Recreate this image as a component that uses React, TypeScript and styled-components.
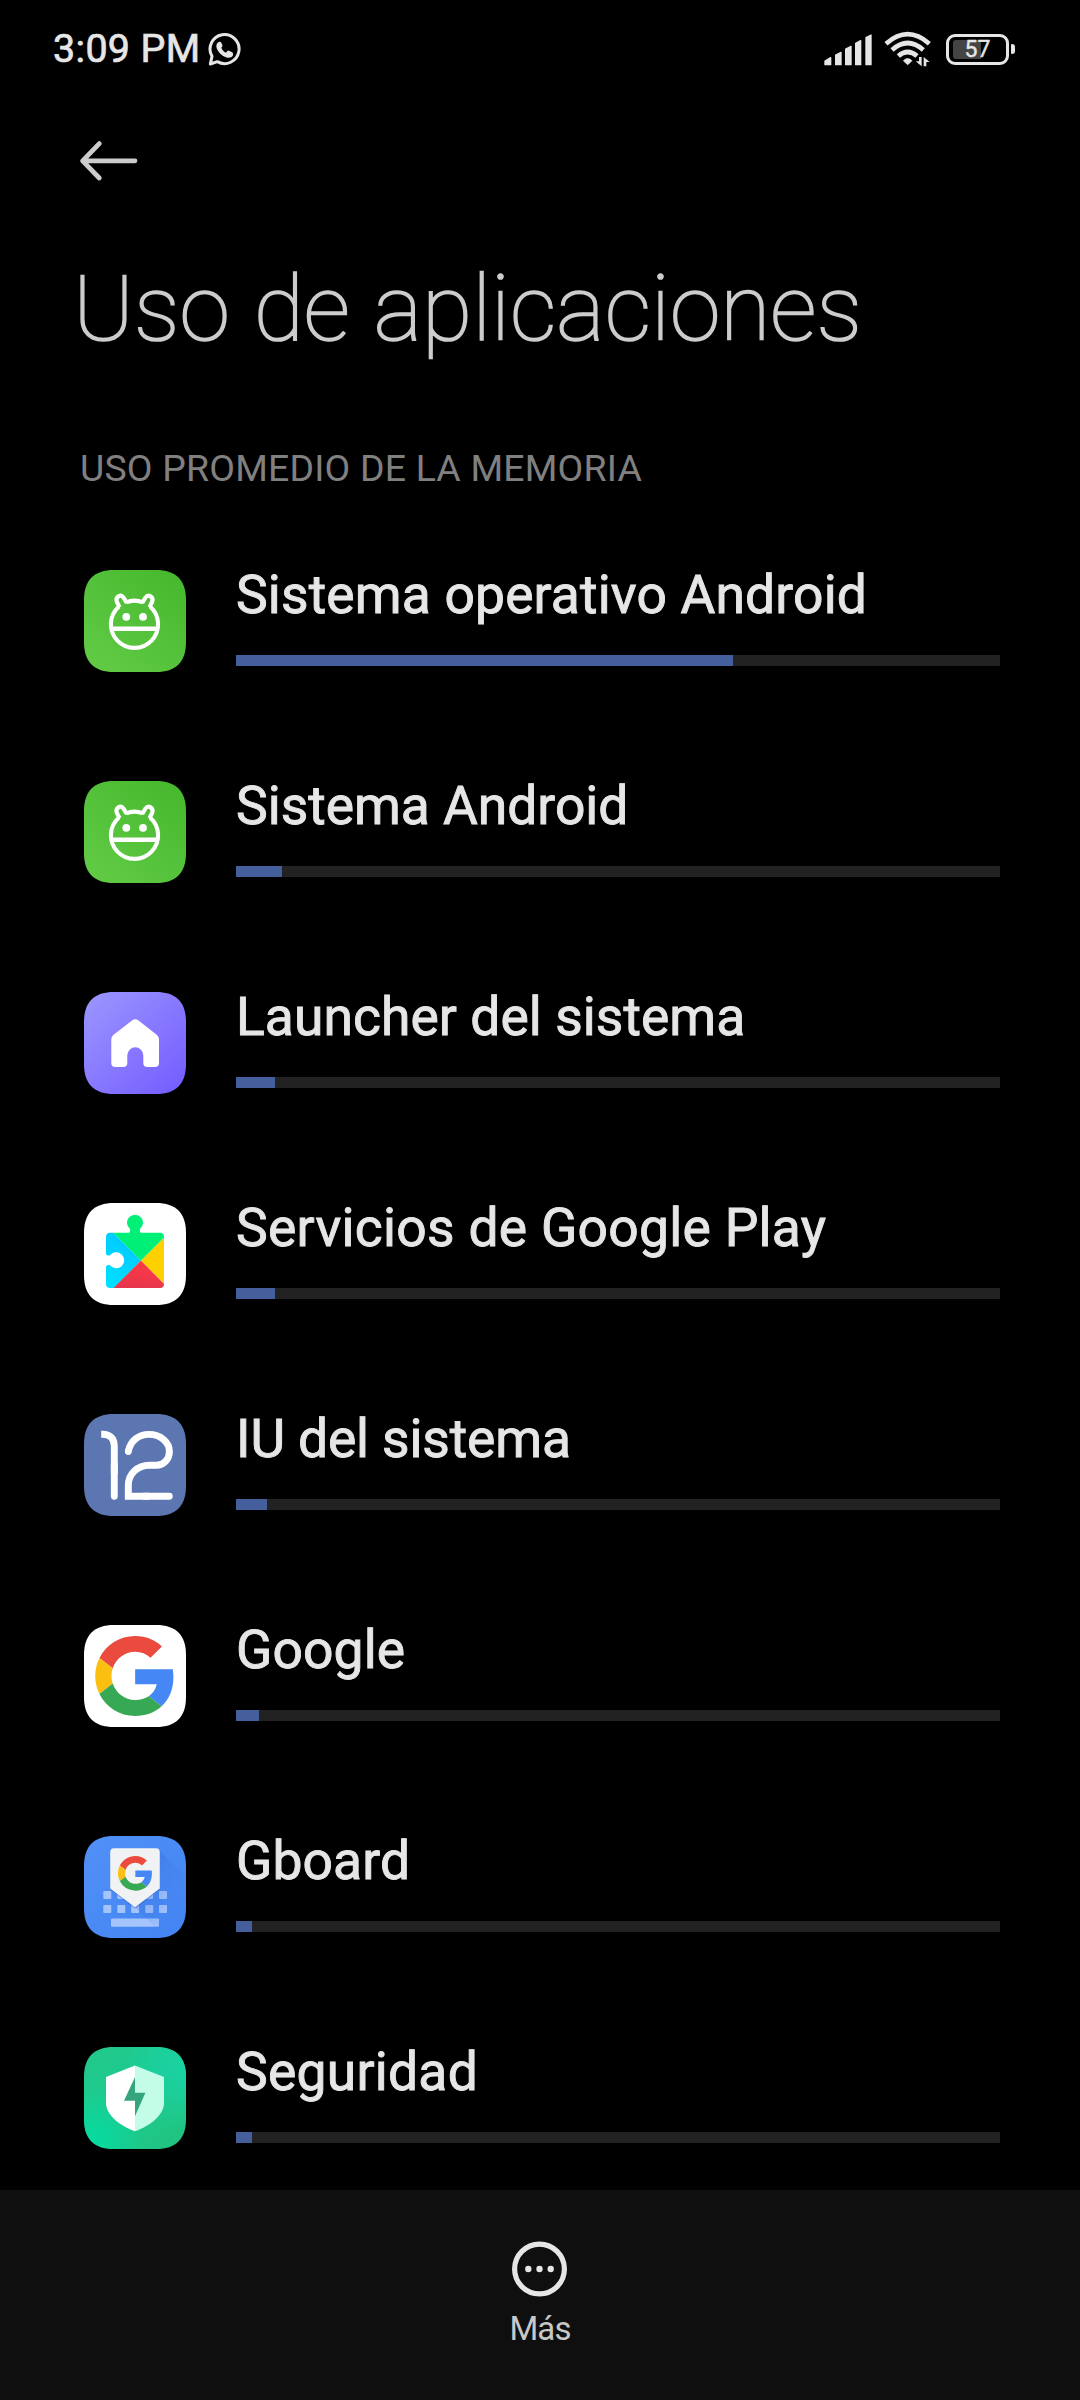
import React from "react";
import styled, { createGlobalStyle } from "styled-components";

const GlobalStyle = createGlobalStyle`
  body {
    margin: 0;
    background: #000;
    font-family: Roboto, "Noto Sans", sans-serif;
    -webkit-font-smoothing: antialiased;
  }
  svg { display: block; flex: none; }
`;

const Screen = styled.div`
  display: flex;
  flex-direction: column;
  width: 1080px;
  height: 2400px;
  overflow: hidden;
  background: #000;
  color: #e6e6e6;
`;

/* ---------- status bar ---------- */

const StatusBar = styled.header`
  display: flex;
  justify-content: space-between;
  align-items: center;
  height: 98px;
  padding: 0 65px 0 53px;
  box-sizing: border-box;
`;

const StatusGroup = styled.div<{ $gap: number }>`
  display: flex;
  align-items: center;
  gap: ${(p) => p.$gap}px;
`;

const Clock = styled.span`
  font-size: 39.4px;
  line-height: 46px;
  font-weight: 400;
  letter-spacing: 0.35px;
  -webkit-text-stroke: 0.7px currentColor;
  white-space: nowrap;
`;

const Battery = styled.div`
  display: flex;
  align-items: center;
  gap: 2px;
`;

const BatteryBody = styled.div`
  position: relative;
  display: flex;
  align-items: center;
  justify-content: center;
  width: 63px;
  height: 31px;
  box-sizing: border-box;
  border: 3px solid #e6e6e6;
  border-radius: 9px;
`;

const BatteryCharge = styled.div`
  position: absolute;
  left: 4px;
  top: 3px;
  width: 28px;
  bottom: 3px;
  border-radius: 3px 0 0 3px;
  background: #444;
`;

const BatteryLabel = styled.span`
  position: relative;
  font-size: 23px;
  line-height: 25px;
  font-weight: 400;
  -webkit-text-stroke: 0.4px currentColor;
`;

const BatteryNub = styled.div`
  width: 4px;
  height: 10px;
  border-radius: 1px 3px 3px 1px;
  background: #e6e6e6;
`;

/* ---------- heading ---------- */

const AppBar = styled.nav`
  display: flex;
  align-items: center;
  height: 125px;
  padding-left: 79px;
`;

const BackButton = styled.button`
  padding: 0;
  border: 0;
  background: none;
  color: #ccc;
`;

const Title = styled.h1`
  margin: 32px 0 0;
  padding-left: 73px;
  font-size: 91.4px;
  line-height: 107px;
  font-weight: 100;
  letter-spacing: 0.05px;
  word-spacing: 2px;
  -webkit-text-stroke: 1.7px currentColor;
  color: #ccc;
  white-space: nowrap;
`;

const SectionLabel = styled.h2`
  margin: 84px 0 0;
  padding-left: 80px;
  font-size: 37.4px;
  line-height: 44px;
  font-weight: 400;
  letter-spacing: 0.2px;
  color: #808080;
  white-space: nowrap;
`;

/* ---------- list ---------- */

const AppList = styled.ul`
  flex: 1;
  min-height: 0;
  margin: 0;
  padding: 40px 0 0;
  overflow: hidden;
  list-style: none;
`;

const AppRow = styled.li`
  display: flex;
  align-items: flex-start;
  gap: 50px;
  height: 211px;
  padding: 34px 80px 0 84px;
  box-sizing: border-box;
`;

const IconSlot = styled.div`
  flex: none;
  width: 102px;
  padding-top: 6px;
`;

const RowBody = styled.div`
  display: flex;
  flex: 1;
  flex-direction: column;
  gap: 29px;
`;

const AppName = styled.span<{ $spacing: number }>`
  font-size: 53.4px;
  line-height: 62px;
  font-weight: 400;
  letter-spacing: ${(p) => p.$spacing}px;
  -webkit-text-stroke: 0.9px currentColor;
  white-space: nowrap;
`;

const Track = styled.div`
  height: 11px;
  background: #222;
`;

const Fill = styled.div`
  height: 100%;
  background: #455e9c;
`;

/* ---------- bottom bar ---------- */

const BottomBar = styled.footer`
  display: flex;
  flex-direction: column;
  align-items: center;
  gap: 12px;
  height: 210px;
  padding-top: 51px;
  box-sizing: border-box;
  background: #0f0f0f;
`;

const MoreLabel = styled.span`
  font-size: 33px;
  line-height: 40px;
  letter-spacing: -0.9px;
  color: #c8c8c8;
`;

/* ---------- icons ---------- */

const SQUIRCLE =
  "M30 0H72C92 0 102 10 102 30V72C102 92 92 102 72 102H30C10 102 0 92 0 72V30C0 10 10 0 30 0Z";

function AppIcon({ fill, children }: { fill: string; children: React.ReactNode }) {
  return (
    <svg width="102" height="102" viewBox="0 0 102 102" fill="none">
      <path d={SQUIRCLE} fill={fill} />
      {children}
    </svg>
  );
}

function AndroidIcon({ id }: { id: string }) {
  return (
    <AppIcon fill={`url(#${id})`}>
      <defs>
        <linearGradient id={id} x1="0.1" y1="1" x2="0.9" y2="0">
          <stop offset="0" stopColor="#62cb46" />
          <stop offset="1" stopColor="#46b82e" />
        </linearGradient>
      </defs>
      <g stroke="#fff" strokeWidth="4.1" strokeLinejoin="round">
        <path d="M42 32.3A23.6 23.6 0 0 1 59 32.3" />
        <path d="M66 36.5A23.6 23.6 0 1 1 35 36.5" />
        <path d="M35.6 37.2L32.8 31.8Q31.6 28 34.4 26.4Q37.4 24.6 39.6 27.6L42.8 33" />
        <path d="M65.4 37.2L68.2 31.8Q69.4 28 66.6 26.4Q63.6 24.6 61.4 27.6L58.2 33" />
        <path d="M27.5 58.7H73.5" strokeWidth="4.6" />
      </g>
      <circle cx="42.3" cy="46.8" r="3.9" fill="#fff" />
      <circle cx="59" cy="46.8" r="3.9" fill="#fff" />
    </AppIcon>
  );
}

function LauncherIcon() {
  return (
    <AppIcon fill="url(#launcher)">
      <defs>
        <linearGradient id="launcher" x1="0" y1="0" x2="1" y2="1">
          <stop offset="0" stopColor="#9c97ff" />
          <stop offset="1" stopColor="#735bff" />
        </linearGradient>
      </defs>
      <path
        fill="#fff"
        d="M48 28.6Q51.2 26 54.5 28.6L73 43Q75 44.7 75 47.5V71Q75 75 71 75H63.3Q59.3 75 59.3 71V63.3A8 8 0 0 0 43.3 63.3V71Q43.3 75 39.3 75H31.3Q27.3 75 27.3 71V47.5Q27.3 44.7 29.3 43Z"
      />
    </AppIcon>
  );
}

function PlayServicesIcon() {
  return (
    <AppIcon fill="#fff">
      <defs>
        <clipPath id="puzzle">
          <path d="M26.5 29.7H45.3Q46.6 28.5 46 26A8 8 0 1 1 56 26Q55.4 28.5 56.7 29.7H76Q80 29.7 80 33.7V81Q80 85 76 85H26Q22 85 22 81V63.5Q23.5 61.4 26 62.3A8 8 0 1 0 26 52.3Q23.5 53.2 22 51.2V34Q22 29.7 26.5 29.7Z" />
        </clipPath>
        <linearGradient id="playBlue" x1="0.6" y1="0" x2="0.2" y2="1">
          <stop offset="0" stopColor="#00c4ff" />
          <stop offset="1" stopColor="#00e4ff" />
        </linearGradient>
        <linearGradient id="playRed" x1="0.6" y1="0" x2="0.3" y2="1">
          <stop offset="0" stopColor="#ff3a44" />
          <stop offset="1" stopColor="#dd3350" />
        </linearGradient>
      </defs>
      <g clipPath="url(#puzzle)">
        <path d="M57 57.5L20 20.5V95L57 57.5Z" fill="url(#playBlue)" />
        <path d="M57 57.5L94 95H19.5Z" fill="url(#playRed)" />
        <path d="M57 57.5L94 20.5V94.5Z" fill="#ffd000" />
        <path d="M57 57.5L9 9.5H105Z" fill="#00ef76" />
      </g>
    </AppIcon>
  );
}

function SystemUiIcon() {
  return (
    <AppIcon fill="#5c76b1">
      <g stroke="#fff" strokeWidth="6.9">
        <path d="M17.2 20.2H18.5C25.5 20.2 30.3 24 30.3 32V60" />
        <path d="M30.3 50V82.2" strokeLinecap="round" />
        <path
          d="M44.3 37.4C46.5 26.5 55 20.4 64.8 20.4C77 20.4 85.4 28.4 85.4 37.4C85.4 45.5 79.5 51.3 72.5 51.3H65.5C53.5 51.3 44.3 60 44.3 71.5V82.2H65"
        />
        <path d="M44.3 37.4V37.5M60 82.2H85.3" strokeLinecap="round" />
      </g>
    </AppIcon>
  );
}

function GoogleMark({ transform }: { transform: string }) {
  return (
    <g transform={transform}>
      <path fill="#ea4b3e" d="M24 9.5c3.54 0 6.71 1.22 9.21 3.6l6.85-6.85C35.9 2.38 30.47 0 24 0 14.62 0 6.51 5.38 2.56 13.22l7.98 6.19C12.43 13.72 17.74 9.5 24 9.5z" />
      <path fill="#4587f4" d="M46.98 24.55c0-1.57-.15-3.09-.38-4.55H24v9.02h12.94c-.58 2.96-2.26 5.48-4.78 7.18l7.73 6c4.51-4.18 7.09-10.36 7.09-17.65z" />
      <path fill="#fbbf12" d="M10.53 28.59c-.48-1.45-.76-2.99-.76-4.59s.27-3.14.76-4.59l-7.98-6.19C.92 16.46 0 20.12 0 24c0 3.88.92 7.54 2.56 10.78l7.97-6.19z" />
      <path fill="#37a853" d="M24 48c6.48 0 11.93-2.13 15.89-5.81l-7.73-6c-2.15 1.45-4.92 2.3-8.16 2.3-6.26 0-11.57-4.22-13.47-9.91l-7.98 6.19C6.51 42.62 14.62 48 24 48z" />
    </g>
  );
}

function GoogleIcon() {
  return (
    <AppIcon fill="#fff">
      <GoogleMark transform="translate(11.2 11) scale(1.665)" />
    </AppIcon>
  );
}

const KEY_COLUMNS = [19.3, 33.3, 47.2, 61.2, 75];

function GboardIcon() {
  return (
    <AppIcon fill="url(#gboard)">
      <defs>
        <linearGradient id="gboard" x1="0" y1="0" x2="1" y2="1">
          <stop offset="0" stopColor="#5090f6" />
          <stop offset="1" stopColor="#4484f3" />
        </linearGradient>
        <linearGradient id="gboardShade" x1="0.2" y1="0.2" x2="0.8" y2="0.8">
          <stop offset="0" stopColor="#2f62c4" stopOpacity="0.55" />
          <stop offset="1" stopColor="#4484f3" stopOpacity="0" />
        </linearGradient>
      </defs>
      {[55, 69].map((y) =>
        KEY_COLUMNS.map((x) => (
          <rect key={`${x}-${y}`} x={x} y={y} width="8" height="8" rx="1" fill="#a5c4fb" />
        ))
      )}
      <rect x="27" y="82.6" width="48" height="8.2" rx="1" fill="#a5c4fb" />
      <path d="M75 14L102 41V90L88 102H82L51 71Z" fill="url(#gboardShade)" opacity="0.6" />
      <path d="M30 13.6H72Q76 13.6 76 17V53.5L51 72.8L26 53.5V17Q26 13.6 30 13.6Z" fill="#2c5fc0" opacity="0.4" />
      <path d="M30 12.2H72Q75.8 12.2 75.8 16V52.5L51 71.2L26.2 52.5V16Q26.2 12.2 30 12.2Z" fill="#f1f2f3" />
      <GoogleMark transform="translate(34 20) scale(0.722)" />
    </AppIcon>
  );
}

function SecurityIcon() {
  return (
    <AppIcon fill="url(#secBase)">
      <defs>
        <linearGradient id="secBase" x1="0" y1="0" x2="1" y2="1">
          <stop offset="0" stopColor="#22c888" />
          <stop offset="0.5" stopColor="#1ccb92" />
          <stop offset="1" stopColor="#22c27c" />
        </linearGradient>
        <radialGradient id="secLeft" cx="0" cy="1" r="0.6">
          <stop offset="0" stopColor="#02dea2" />
          <stop offset="1" stopColor="#02dea2" stopOpacity="0" />
        </radialGradient>
        <radialGradient id="secRight" cx="1" cy="0.2" r="0.6">
          <stop offset="0" stopColor="#1ad3a4" />
          <stop offset="1" stopColor="#1ad3a4" stopOpacity="0" />
        </radialGradient>
      </defs>
      <path d={SQUIRCLE} fill="url(#secLeft)" />
      <path d={SQUIRCLE} fill="url(#secRight)" />
      <path d="M51 18.6L22 30V56C22 68 36 79 51 84.3Z" fill="#fff" />
      <path d="M51 18.6L80 30V56C80 68 66 79 51 84.3Z" fill="#c3fde7" />
      <path d="M51 30L40 53.7H51V69.3L61.4 45.8H51Z" fill="#35a67c" />
    </AppIcon>
  );
}

function WhatsAppIcon() {
  return (
    <svg width="35" height="35" viewBox="0 0 105 105" fill="none">
      <path
        d="M10 96L15 73A43.5 43.5 0 1 1 31 89Z"
        stroke="#e6e6e6"
        strokeWidth="9"
        strokeLinejoin="round"
      />
      <path
        d="M36 30C29 32 26 41 30 51C36 64 48 74 62 77C70 78 77 75 78 69C79 65 78 62 74 60L66 56C63 55 61 57 57 62C51 59 46 54 43 47C46 44 47 42 46 39L43 32C41 29 39 29 36 30Z"
        fill="#e6e6e6"
      />
    </svg>
  );
}

function SignalIcon() {
  return (
    <svg width="49" height="33" viewBox="39 38 147 99" fill="#e6e6e6" stroke="#e6e6e6" strokeWidth="4" strokeLinejoin="round">
      <path d="M45 122L62 112V133H45Z" />
      <path d="M77 104L93 96V133H77Z" />
      <path d="M107 86L123 78V133H107Z" />
      <path d="M137 69L152 61V133H137Z" />
      <path d="M168 52L183 44V133H168Z" />
    </svg>
  );
}

function WifiIcon() {
  return (
    <svg width="50" height="36" viewBox="223 35 150 108" fill="none" stroke="#e6e6e6">
      <path d="M229 73Q294 16 359 73" strokeWidth="14" />
      <path d="M247 92Q294 50 341 92" strokeWidth="14" />
      <path d="M266 110Q294 86 322 110" strokeWidth="14" />
      <path d="M281 124Q294 111 307 124L296 135Q294 137 292 135Z" fill="#e6e6e6" strokeWidth="2" />
      <g fill="#e6e6e6" stroke="none">
        <path d="M328 113H336V141L318 126H328Z" />
        <path d="M350 141H342V113L360 128H350Z" />
      </g>
    </svg>
  );
}

function BackArrow() {
  return (
    <svg width="60" height="44" viewBox="0 0 60 44" fill="none" stroke="currentColor" strokeWidth="4.8" strokeLinecap="round" strokeLinejoin="round">
      <path d="M20.3 4.6L3.6 21.8L20.3 39M4 21.8H56" />
    </svg>
  );
}

function MoreIcon() {
  return (
    <svg width="56" height="56" viewBox="0 0 56 56">
      <circle cx="27.5" cy="28" r="24.9" fill="none" stroke="#e6e6e6" strokeWidth="5.2" />
      {[16.3, 27.5, 38.7].map((x) => (
        <circle key={x} cx={x} cy="28" r="3.2" fill="#e6e6e6" />
      ))}
    </svg>
  );
}

/* ---------- data ---------- */

type AppUsage = { name: string; usage: number; spacing: number; icon: React.ReactNode };

const apps: AppUsage[] = [
  { name: "Sistema operativo Android", usage: 65.05, spacing: 0.16, icon: <AndroidIcon id="androidOs" /> },
  { name: "Sistema Android", usage: 6.02, spacing: -0.02, icon: <AndroidIcon id="androidSystem" /> },
  { name: "Launcher del sistema", usage: 5.1, spacing: 0.06, icon: <LauncherIcon /> },
  { name: "Servicios de Google Play", usage: 5.1, spacing: 0.28, icon: <PlayServicesIcon /> },
  { name: "IU del sistema", usage: 4.06, spacing: -0.14, icon: <SystemUiIcon /> },
  { name: "Google", usage: 3.01, spacing: 0.1, icon: <GoogleIcon /> },
  { name: "Gboard", usage: 2.1, spacing: 0.1, icon: <GboardIcon /> },
  { name: "Seguridad", usage: 2.1, spacing: 0.25, icon: <SecurityIcon /> },
];

export default function App() {
  return (
    <Screen>
      <GlobalStyle />
      <StatusBar>
        <StatusGroup $gap={7}>
          <Clock>3:09 PM</Clock>
          <WhatsAppIcon />
        </StatusGroup>
        <StatusGroup $gap={12}>
          <SignalIcon />
          <WifiIcon />
          <Battery>
            <BatteryBody>
              <BatteryCharge />
              <BatteryLabel>57</BatteryLabel>
            </BatteryBody>
            <BatteryNub />
          </Battery>
        </StatusGroup>
      </StatusBar>
      <AppBar>
        <BackButton aria-label="Atrás">
          <BackArrow />
        </BackButton>
      </AppBar>
      <Title>Uso de aplicaciones</Title>
      <SectionLabel>USO PROMEDIO DE LA MEMORIA</SectionLabel>
      <AppList>
        {apps.map((app) => (
          <AppRow key={app.name}>
            <IconSlot>{app.icon}</IconSlot>
            <RowBody>
              <AppName $spacing={app.spacing}>{app.name}</AppName>
              <Track>
                <Fill style={{ width: `${app.usage}%` }} />
              </Track>
            </RowBody>
          </AppRow>
        ))}
      </AppList>
      <BottomBar>
        <MoreIcon />
        <MoreLabel>Más</MoreLabel>
      </BottomBar>
    </Screen>
  );
}
